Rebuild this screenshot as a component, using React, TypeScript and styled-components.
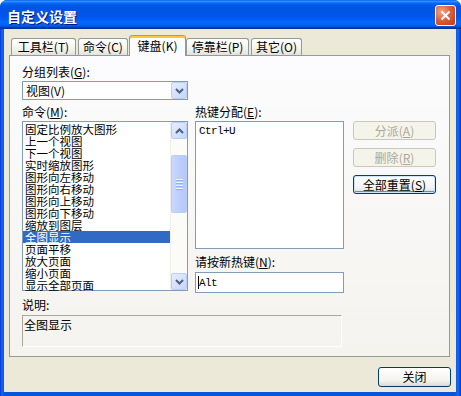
import * as React from "react";
import styled, { createGlobalStyle, css } from "styled-components";

const GlobalStyle = createGlobalStyle`
  html, body { margin: 0; padding: 0; background: #ffffff; }
  body {
    font-family: "Noto Sans CJK SC", "Liberation Sans", sans-serif;
    font-size: 12px;
    line-height: 12px;
    color: #000000;
  }
  * { box-sizing: border-box; }
`;

const COMMANDS = [
	"固定比例放大图形",
	"上一个视图",
	"下一个视图",
	"实时缩放图形",
	"图形向左移动",
	"图形向右移动",
	"图形向上移动",
	"图形向下移动",
	"缩放到图层",
	"全图显示",
	"页面平移",
	"放大页面",
	"缩小页面",
	"显示全部页面",
];

const TABS = [
	{ label: "工具栏", key: "T", width: 65 },
	{ label: "命令", key: "C", width: 50 },
	{ label: "键盘", key: "K", width: 57 },
	{ label: "停靠栏", key: "P", width: 63 },
	{ label: "其它", key: "O", width: 51 },
];

const Window = styled.div`
	width: 461px;
	height: 396px;
	display: flex;
	flex-direction: column;
	background: linear-gradient(to right, #0831d9 0, #166aee 2px, #0855dd 4px, #0855dd 455px, #166aee 458px, #0831d9 461px);
	border-radius: 7px 7px 0 0;
	overflow: hidden;
`;

const TitleBar = styled.div`
	height: 29px;
	flex-shrink: 0;
	display: flex;
	align-items: center;
	justify-content: space-between;
	padding: 0 5px 0 7px;
	background: linear-gradient(#0058ee 0%, #3593ff 4%, #288eff 6%, #127dff 8%, #036ffc 10%, #0262ee 14%, #0057e5 20%, #0054e3 24%, #0055eb 56%, #005bf5 66%, #026afe 76%, #0062ef 86%, #0052d6 92%, #0040ab 94%, #003092 100%);
`;

const Title = styled.div`
	color: #ffffff;
	font-weight: bold;
	font-size: 14px;
	line-height: 16px;
	text-shadow: 1px 1px 0 #0a1883;
	padding-top: 2px;
`;

const CloseButton = styled.div`
	width: 21px;
	height: 21px;
	margin-top: 1px;
	border: 1px solid #ffffff;
	border-radius: 3px;
	background: radial-gradient(circle at 30% 30%, #f0a88a 0%, #e0603a 45%, #c2350f 100%);
	display: flex;
	align-items: center;
	justify-content: center;
`;

const Body = styled.div`
	flex: 1;
	margin: 0 5px 4px 4px;
	background: #ece9d8;
	padding: 5px 6px 0 5px;
	display: flex;
	flex-direction: column;
`;

const TabStrip = styled.div`
	height: 21px;
	display: flex;
	align-items: flex-end;
	padding-left: 2px;
`;

const Tab = styled.div<{ $active?: boolean; $w: number; $first?: boolean }>`
	width: ${p => p.$w}px;
	height: 17px;
	margin-left: ${p => (p.$first ? 0 : 2)}px;
	border: 1px solid #919b9c;
	border-bottom: none;
	border-radius: 3px 3px 0 0;
	background: linear-gradient(#ffffff, #f3f3ef 60%, #e3e2da);
	display: flex;
	align-items: center;
	justify-content: center;
	white-space: nowrap;
	position: relative;
	${p =>
		p.$active &&
		css`
			height: 21px;
			margin-left: 1px;
			margin-right: -2px;
			margin-bottom: -1px;
			z-index: 1;
			padding-bottom: 1px;
			background: #fcfcfe;
			border-top: 1px solid #e68b2c;
			box-shadow: inset 0 2px 0 #ffc73c;
		`}
`;

const Pane = styled.div`
	width: 441px;
	height: 302px;
	border: 1px solid #919b9c;
	background: linear-gradient(#fcfcfe, #f4f3ee);
	padding: 10px 0 0 12px;
	display: flex;
	flex-direction: column;
`;

const Label = styled.div<{ $gap?: number }>`
	height: 12px;
	margin-top: ${p => p.$gap ?? 0}px;
	white-space: nowrap;
`;

const Acc = styled.span`
	text-decoration: underline;
`;

const Combo = styled.div`
	width: 166px;
	height: 19px;
	margin-top: 3px;
	border: 1px solid #7f9db9;
	background: #ffffff;
	display: flex;
	align-items: center;
	justify-content: space-between;
	padding: 0 0 0 3px;
`;

const ArrowButton = styled.div<{ $h?: number }>`
	width: 16px;
	height: ${p => p.$h ?? 17}px;
	border: 1px solid #b9cdf6;
	border-radius: 2px;
	background: linear-gradient(135deg, #e6eefc, #c6d6fb);
	display: flex;
	align-items: center;
	justify-content: center;
`;

const MainRow = styled.div`
	display: flex;
	margin-top: 6px;
`;

const Column = styled.div<{ $w: number; $ml?: number }>`
	width: ${p => p.$w}px;
	margin-left: ${p => p.$ml ?? 0}px;
	display: flex;
	flex-direction: column;
`;

const ListBox = styled.div`
	height: 170px;
	margin-top: 3px;
	border: 1px solid #7f9db9;
	background: #ffffff;
	display: flex;
`;

const Items = styled.div`
	flex: 1;
	padding-top: 1px;
`;

const Item = styled.div<{ $selected?: boolean }>`
	height: 12px;
	padding-left: 2px;
	font-size: 11.5px;
	line-height: 12px;
	white-space: nowrap;
	${p =>
		p.$selected &&
		css`
			background: #316ac5;
			color: #ffffff;
		`}
`;

const ScrollBar = styled.div`
	width: 17px;
	display: flex;
	flex-direction: column;
	background: #fbfbf8;
	border-left: 1px solid #f0efe9;
`;

const ScrollTrack = styled.div`
	flex: 1;
	padding-top: 16px;
	display: flex;
	flex-direction: column;
	align-items: center;
`;

const Thumb = styled.div`
	width: 16px;
	height: 58px;
	border: 1px solid #b9cdf6;
	border-radius: 2px;
	background: linear-gradient(to right, #c9d8fc, #bccffb 50%, #b5c9f9);
	display: flex;
	flex-direction: column;
	align-items: center;
	justify-content: center;
	gap: 1px;
`;

const Grip = styled.div`
	width: 7px;
	height: 1px;
	background: #eef4fe;
	box-shadow: 0 1px 0 #8cb0f8;
	margin-bottom: 1px;
`;

const TextBox = styled.div<{ $h: number; $gap?: number }>`
	height: ${p => p.$h}px;
	margin-top: ${p => p.$gap ?? 3}px;
	border: 1px solid #7f9db9;
	background: #ffffff;
	padding: ${p => (p.$h > 30 ? "3px 0 0 3px" : "4px 0 0 2px")};
	font-family: "Liberation Mono", "DejaVu Sans Mono", monospace;
	font-size: 11px;
	letter-spacing: -0.6px;
	display: flex;
	align-items: flex-start;
`;

const Caret = styled.span`
	display: inline-block;
	width: 1px;
	height: 13px;
	background: #000000;
	margin-top: -1px;
`;

const ButtonColumn = styled.div`
	margin-left: 9px;
	padding-top: 15px;
	display: flex;
	flex-direction: column;
	gap: 8px;
`;

const Button = styled.div<{ $w?: number; $h?: number; $disabled?: boolean; $default?: boolean }>`
	width: ${p => p.$w ?? 83}px;
	height: ${p => p.$h ?? 19}px;
	border: 1px solid #003c74;
	border-radius: 3px;
	background: linear-gradient(#ffffff, #f4f3ee 70%, #dcd9cd);
	display: flex;
	align-items: center;
	justify-content: center;
	white-space: nowrap;
	${p =>
		p.$disabled &&
		css`
			border-color: #c9c7ba;
			color: #aca899;
			background: #f5f4ea;
		`}
	${p =>
		p.$default &&
		css`
			box-shadow: inset 0 0 0 1px #cee7ff, inset 0 -1px 0 1px #6982ee;
		`}
`;

const DescBox = styled.div`
	width: 320px;
	height: 32px;
	margin-top: 4px;
	border-top: 1px solid #aca899;
	border-left: 1px solid #aca899;
	border-right: 1px solid #ffffff;
	border-bottom: 1px solid #ffffff;
	padding: 3px 0 0 1px;
`;

const Footer = styled.div`
	flex: 1;
	display: flex;
	justify-content: flex-end;
	padding-top: 10px;
	margin-right: -1px;
`;

function Chevron({ up }: { up?: boolean }) {
	return (
		<svg width="9" height="6" viewBox="0 0 9 6">
			<path
				d={up ? "M1 5 L4.5 1.5 L8 5" : "M1 1 L4.5 4.5 L8 1"}
				fill="none"
				stroke="#4d6185"
				strokeWidth="2"
			/>
		</svg>
	);
}

function Accel({ text, k, colon = true }: { text: string; k: string; colon?: boolean }) {
	return (
		<>
			{text}(<Acc>{k}</Acc>){colon ? ":" : ""}
		</>
	);
}

export default function App() {
	return (
		<>
			<GlobalStyle />
			<Window>
				<TitleBar>
					<Title>自定义设置</Title>
					<CloseButton>
						<svg width="11" height="11" viewBox="0 0 11 11">
							<path d="M1.5 1.5 L9.5 9.5 M9.5 1.5 L1.5 9.5" stroke="#ffffff" strokeWidth="2" />
						</svg>
					</CloseButton>
				</TitleBar>
				<Body>
					<TabStrip>
						{TABS.map((t, i) => (
							<Tab key={t.key} $w={t.width} $first={i === 0} $active={i === 2}>
								{t.label}({t.key})
							</Tab>
						))}
					</TabStrip>
					<Pane>
						<Label>
							<Accel text="分组列表" k="G" />
						</Label>
						<Combo>
							<span>视图(V)</span>
							<ArrowButton $h={17}>
								<Chevron />
							</ArrowButton>
						</Combo>
						<MainRow>
							<Column $w={166}>
								<Label>
									<Accel text="命令" k="M" />
								</Label>
								<ListBox>
									<Items>
										{COMMANDS.map((c, i) => (
											<Item key={c} $selected={i === 9}>
												{c}
											</Item>
										))}
									</Items>
									<ScrollBar>
										<ArrowButton $h={17}>
											<Chevron up />
										</ArrowButton>
										<ScrollTrack>
											<Thumb>
												<Grip />
												<Grip />
												<Grip />
												<Grip />
											</Thumb>
										</ScrollTrack>
										<ArrowButton $h={17}>
											<Chevron />
										</ArrowButton>
									</ScrollBar>
								</ListBox>
							</Column>
							<Column $w={149} $ml={7}>
								<Label>
									<Accel text="热键分配" k="E" />
								</Label>
								<TextBox $h={128}>Ctrl+U</TextBox>
								<Label $gap={7}>
									<Accel text="请按新热键" k="N" />
								</Label>
								<TextBox $h={21} $gap={4}>
									<Caret />
									Alt
								</TextBox>
							</Column>
							<ButtonColumn>
								<Button $disabled>
									<Accel text="分派" k="A" colon={false} />
								</Button>
								<Button $disabled>
									<Accel text="删除" k="R" colon={false} />
								</Button>
								<Button $default>
									<Accel text="全部重置" k="S" colon={false} />
								</Button>
							</ButtonColumn>
						</MainRow>
						<Label $gap={6}>说明:</Label>
						<DescBox>全图显示</DescBox>
					</Pane>
					<Footer>
						<Button $w={73} $h={20}>
							关闭
						</Button>
					</Footer>
				</Body>
			</Window>
		</>
	);
}
